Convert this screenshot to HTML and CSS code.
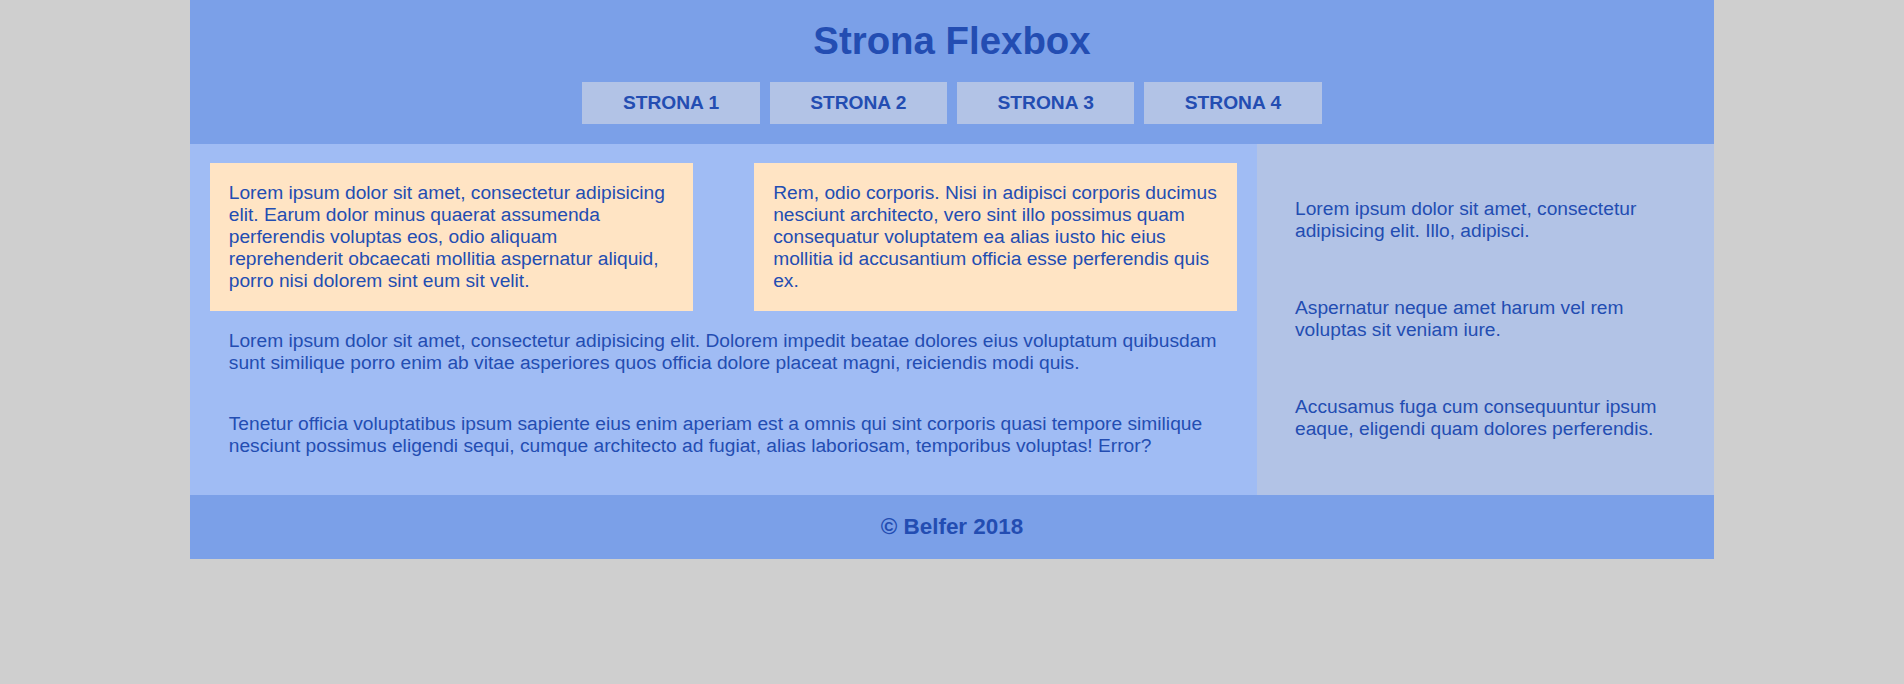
FILE: index.html
```html
<!DOCTYPE html>
<html lang="pl">
<head>
<meta charset="utf-8">
<title>Strona Flexbox</title>
<link rel="stylesheet" href="styles.css">
</head>
<body>
<div class="page">
  <header class="header">
    <h1 class="title">Strona Flexbox</h1>
    <nav class="nav">
      <a class="nav-link" href="#">Strona 1</a>
      <a class="nav-link" href="#">Strona 2</a>
      <a class="nav-link" href="#">Strona 3</a>
      <a class="nav-link" href="#">Strona 4</a>
    </nav>
  </header>
  <div class="content">
    <main class="main">
      <div class="boxes">
        <div class="box"><p class="box-text">Lorem ipsum dolor sit amet, consectetur adipisicing elit. Earum dolor minus quaerat assumenda perferendis voluptas eos, odio aliquam reprehenderit obcaecati mollitia aspernatur aliquid, porro nisi dolorem sint eum sit velit.</p></div>
        <div class="box"><p class="box-text">Rem, odio corporis. Nisi in adipisci corporis ducimus nesciunt architecto, vero sint illo possimus quam consequatur voluptatem ea alias iusto hic eius mollitia id accusantium officia esse perferendis quis ex.</p></div>
      </div>
      <p class="text">Lorem ipsum dolor sit amet, consectetur adipisicing elit. Dolorem impedit beatae dolores eius voluptatum quibusdam sunt similique porro enim ab vitae asperiores quos officia dolore placeat magni, reiciendis modi quis.</p>
      <p class="text">Tenetur officia voluptatibus ipsum sapiente eius enim aperiam est a omnis qui sint corporis quasi tempore similique nesciunt possimus eligendi sequi, cumque architecto ad fugiat, alias laboriosam, temporibus voluptas! Error?</p>
    </main>
    <aside class="sidebar">
      <p class="side-text">Lorem ipsum dolor sit amet, consectetur adipisicing elit. Illo, adipisci.</p>
      <p class="side-text">Aspernatur neque amet harum vel rem voluptas sit veniam iure.</p>
      <p class="side-text">Accusamus fuga cum consequuntur ipsum eaque, eligendi quam dolores perferendis.</p>
    </aside>
  </div>
  <footer class="footer">
    <h3 class="footer-text">&copy; Belfer 2018</h3>
  </footer>
</div>
</body>
</html>
```

FILE: styles.css
```css
* {
  box-sizing: border-box;
}

html,
body {
  margin: 0;
  padding: 0;
}

body {
  background: #cfcfcf;
  font-family: "Liberation Sans", Arial, sans-serif;
  font-size: 19.2px;
  color: #234db2;
}

.page {
  width: 80%;
  margin: 0 auto;
}

.header {
  background: #7ba0e8;
  padding: 19.2px;
  text-align: center;
}

.title {
  margin: 0 0 19.2px;
  font-size: 38.4px;
  font-weight: bold;
}

.nav {
  display: flex;
  justify-content: center;
  gap: 10px;
}

.nav-link {
  background: #b2c3e6;
  padding: 10px 40.5px;
  color: inherit;
  text-decoration: none;
  font-weight: bold;
  text-transform: uppercase;
}

.content {
  display: flex;
}

.main {
  flex: 0 0 70%;
  background: #a0bcf4;
  padding: 19.2px;
  display: flex;
  flex-direction: column;
}

.boxes {
  display: flex;
  gap: 61px;
}

.box {
  flex: 1;
  background: #ffe4c4;
  padding: 19.2px;
}

.box-text {
  margin: 0;
}

.text {
  margin: 19.2px 0;
  padding: 0 19.2px;
}

.sidebar {
  flex: 0 0 30%;
  background: #b2c3e6;
  padding: 0 38.4px;
  display: flex;
  flex-direction: column;
  justify-content: space-evenly;
}

.side-text {
  margin: 0;
}

.footer {
  background: #7ba0e8;
  padding: 19.2px;
  text-align: center;
}

.footer-text {
  margin: 0;
  font-size: 22.46px;
  font-weight: bold;
}
```
